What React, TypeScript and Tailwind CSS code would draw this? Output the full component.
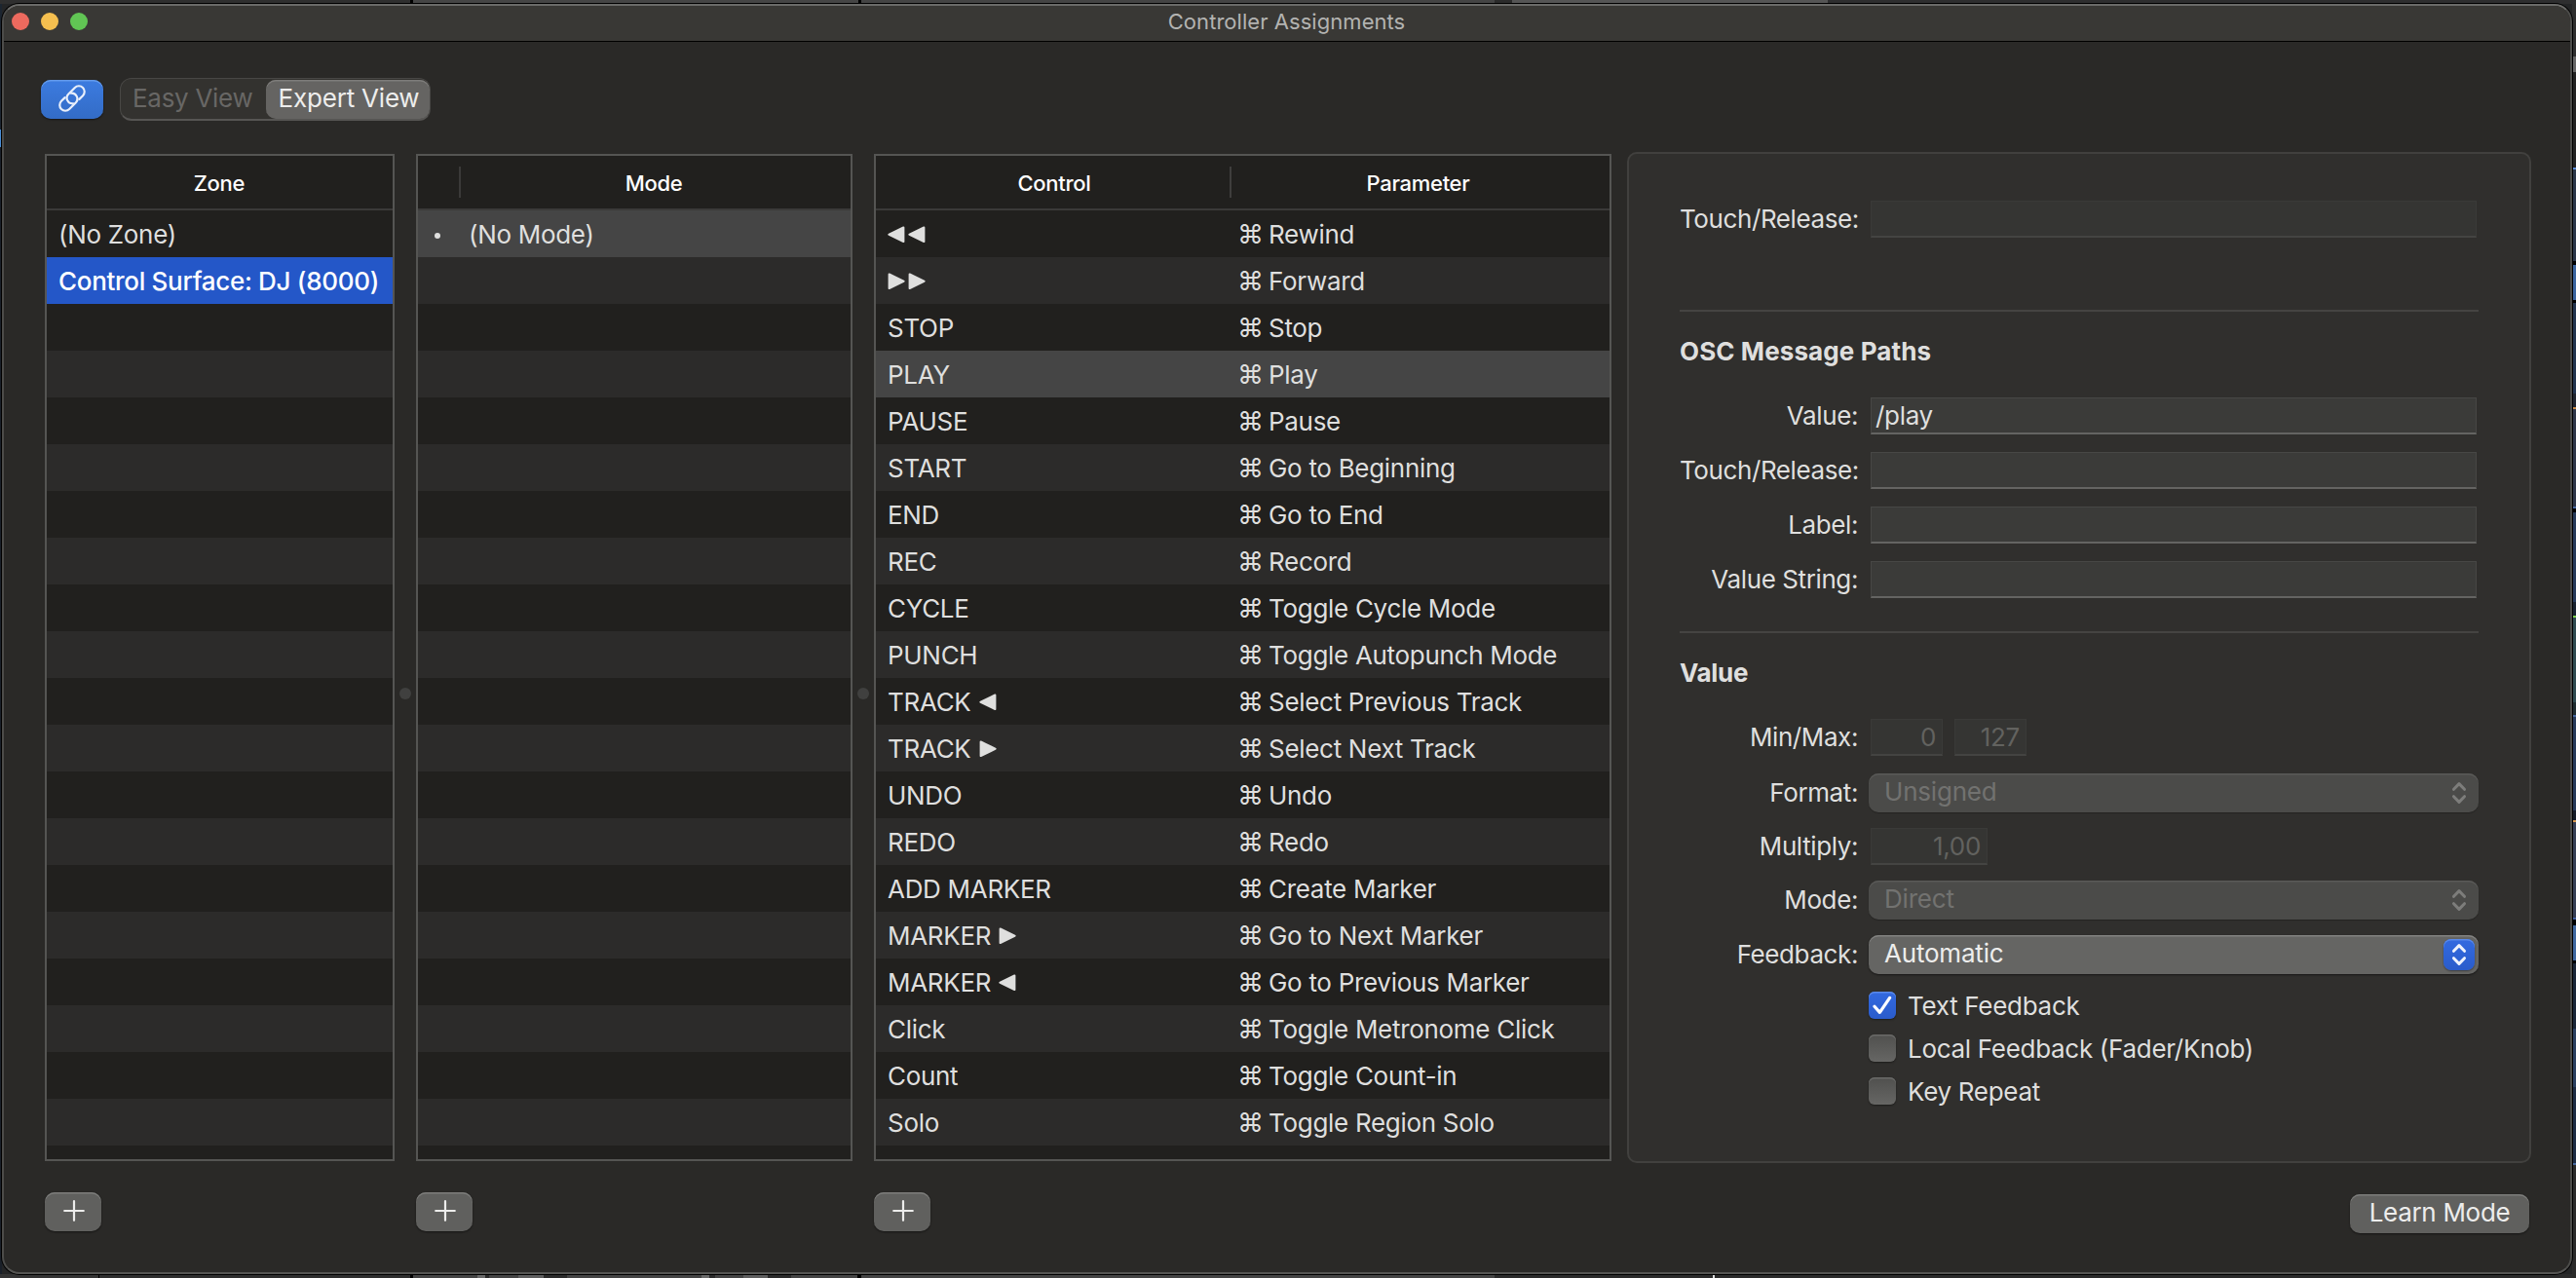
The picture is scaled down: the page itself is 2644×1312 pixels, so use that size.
import type { ReactNode } from 'react'
import clsx from 'clsx'

type Assignment = { control: ReactNode; parameter: string }

function Arrow({ left = false }: { left?: boolean }) {
  return (
    <svg className="w-[18px] h-[18px] shrink-0" viewBox="0 0 18 18" fill="currentColor">
      <path
        transform={left ? 'matrix(-1 0 0 1 18 0)' : undefined}
        d="M0.6 1.5C0.6 0.6 1.3 0.2 2.1 0.6L16.9 7.7C18 8.3 18 9.2 16.9 9.8L2.1 16.9C1.3 17.3 0.6 16.9 0.6 16Z"
      />
    </svg>
  )
}

const assignments: Assignment[] = [
  { control: <span className="flex gap-[3px]"><Arrow left /><Arrow left /></span>, parameter: 'Rewind' },
  { control: <span className="flex gap-[3px]"><Arrow /><Arrow /></span>, parameter: 'Forward' },
  { control: 'STOP', parameter: 'Stop' },
  { control: 'PLAY', parameter: 'Play' },
  { control: 'PAUSE', parameter: 'Pause' },
  { control: 'START', parameter: 'Go to Beginning' },
  { control: 'END', parameter: 'Go to End' },
  { control: 'REC', parameter: 'Record' },
  { control: 'CYCLE', parameter: 'Toggle Cycle Mode' },
  { control: 'PUNCH', parameter: 'Toggle Autopunch Mode' },
  { control: <>TRACK<Arrow left /></>, parameter: 'Select Previous Track' },
  { control: <>TRACK<Arrow /></>, parameter: 'Select Next Track' },
  { control: 'UNDO', parameter: 'Undo' },
  { control: 'REDO', parameter: 'Redo' },
  { control: 'ADD MARKER', parameter: 'Create Marker' },
  { control: <>MARKER<Arrow /></>, parameter: 'Go to Next Marker' },
  { control: <>MARKER<Arrow left /></>, parameter: 'Go to Previous Marker' },
  { control: 'Click', parameter: 'Toggle Metronome Click' },
  { control: 'Count', parameter: 'Toggle Count-in' },
  { control: 'Solo', parameter: 'Toggle Region Solo' },
]

const SELECTED_ASSIGNMENT = 3

function Row({ children, className }: { children?: ReactNode; className?: string }) {
  return (
    <div className={clsx('h-12 pt-0.5 shrink-0 flex items-center even:bg-[#2c2b2a]', className)}>{children}</div>
  )
}

function EmptyRows({ count }: { count: number }) {
  return Array.from({ length: count }, (_, i) => <Row key={i} />)
}

function Table({ header, children, className }: { header: ReactNode; children: ReactNode; className: string }) {
  return (
    <div className={clsx('mt-0.5 h-[1034px] flex flex-col shrink-0 border-2 border-[#555553] bg-[#21201e] overflow-hidden', className)}>
      <div className="h-14 shrink-0 flex items-center border-b-2 border-[#3b3a39] text-[22px] font-medium text-white">
        {header}
      </div>
      <div className="flex flex-col">{children}</div>
    </div>
  )
}

function Splitter() {
  return (
    <div className="w-[22px] shrink-0 flex justify-center">
      <div className="mt-[550px] w-3 h-3 rounded-full bg-[#40403f]" />
    </div>
  )
}

function AddButton() {
  return (
    <button className="w-[58px] h-10 flex items-center justify-center rounded-[10px] bg-[#60605e] shadow-[inset_0_1.5px_0_#7d7d7b,0_1px_2px_rgba(0,0,0,0.5)]">
      <svg className="w-[22px] h-[22px] mb-[3px] ml-px" viewBox="0 0 22 22" stroke="#ededec" strokeWidth="2.2" strokeLinecap="round">
        <path d="M11 1.2V20.8M1.2 11H20.8" />
      </svg>
    </button>
  )
}

function Chevrons({ className }: { className?: string }) {
  return (
    <svg className={clsx('w-4 h-6', className)} viewBox="0 0 16 24" fill="none" stroke="currentColor" strokeWidth="3" strokeLinecap="round" strokeLinejoin="round">
      <path d="M2.5 8.3L8 2.6L13.5 8.3M2.5 15.7L8 21.4L13.5 15.7" />
    </svg>
  )
}

function FormRow({ label, children, className }: { label: string; children: ReactNode; className?: string }) {
  return (
    <div className={clsx('flex items-center', className)}>
      <span className="w-[183px] -mr-px shrink-0 text-right whitespace-nowrap tracking-[-0.4px]">{label}</span>
      {children}
    </div>
  )
}

function Field({ value, disabled, className }: { value?: string; disabled?: boolean; className?: string }) {
  return (
    <div
      className={clsx(
        'h-[38px] flex items-center border border-b-2',
        disabled
          ? 'justify-end pr-[6px] bg-[#353533] border-[#3a3a38] border-b-[#444442] text-[#62625f]'
          : 'pl-1 bg-[#3b3b39] border-[#474745] border-b-[#646462]',
        className ?? 'ml-[14px] w-[622px]',
      )}
    >
      {value}
    </div>
  )
}

function Select({ value, disabled }: { value: string; disabled?: boolean }) {
  return (
    <div
      className={clsx(
        'ml-3 w-[626px] h-10 flex items-center justify-between rounded-[10px] pl-4 pr-1',
        disabled
          ? 'bg-[#4b4b49] text-[#727270] shadow-[inset_0_1.5px_0_#5a5a58,0_1px_1px_rgba(0,0,0,0.25)]'
          : 'bg-[#656563] text-[#ededec] shadow-[inset_0_1.5px_0_#828280,0_1px_2px_rgba(0,0,0,0.5)]',
      )}
    >
      <span className="pb-0.5 tracking-[-0.2px]">{value}</span>
      <span
        className={clsx(
          'w-8 h-8 flex items-center justify-center rounded-[8px]',
          !disabled && 'bg-linear-to-b from-[#336ae0] to-[#2a5ccb] shadow-[inset_0_1.5px_0_#5a8aea,0_1px_2px_rgba(0,0,0,0.4)]',
        )}
      >
        <Chevrons className={disabled ? 'text-[#7d7d7b]' : 'text-[#eef2fc]'} />
      </span>
    </div>
  )
}

function Checkbox({ label, checked }: { label: string; checked?: boolean }) {
  return (
    <div className="flex items-center gap-3 h-7">
      <span
        className={clsx(
          'w-7 h-7 flex items-center justify-center rounded-[6px]',
          checked
            ? 'bg-linear-to-b from-[#336ae0] to-[#2a5ccb] shadow-[inset_0_1.5px_0_#5a8aea,0_1px_2px_rgba(0,0,0,0.4)]'
            : 'bg-linear-to-b from-[#50504e] to-[#666664] shadow-[inset_0_1.5px_0_#6a6a68,0_1px_2px_rgba(0,0,0,0.4)]',
        )}
      >
        {checked && (
          <svg className="w-5 h-5" viewBox="0 0 20 20" fill="none" stroke="#fff" strokeWidth="3.2" strokeLinecap="round" strokeLinejoin="round">
            <path d="M2 11.2L7.4 17.4L17.6 2.4" />
          </svg>
        )}
      </span>
      <span className="pt-0.5">{label}</span>
    </div>
  )
}

// Slivers of the project window that show behind the dialog
const topSlivers = [
  'w-[421px] bg-[#2f2f2f]',
  'w-[3px] bg-black',
  'w-[457px] bg-[#454545]',
  'w-[3px] bg-black',
  'w-[650px] bg-[#444444]',
  'w-[18px] bg-[#2b2b2b]',
  'w-[324px] bg-[#555555]',
  'grow bg-[#2e2e2f]',
]

const bottomSlivers = [
  'w-[101px] bg-[#343434]',
  'w-[1px] bg-black',
  'w-[319px] bg-[#2e2e2e]',
  'w-[3px] bg-black',
  'w-[66px] bg-[#444444]',
  'w-[8px] bg-[#6a6a6a]',
  'w-[4px] bg-[#2b2b2b]',
  'w-[30px] bg-[#444444]',
  'w-[26px] bg-[#5e5e5e]',
  'w-[24px] bg-[#2b2b2b]',
  'w-[138px] bg-[#444444]',
  'w-[8px] bg-[#6a6a6a]',
  'w-[6px] bg-[#2b2b2b]',
  'w-[29px] bg-[#444444]',
  'w-[25px] bg-[#5e5e5e]',
  'w-[24px] bg-[#2b2b2b]',
  'w-[68px] bg-[#444444]',
  'w-[4px] bg-black',
  'w-[650px] bg-[#444444]',
  'w-[224px] bg-[#2b2b2b]',
  'w-[2px] bg-[#dddddd]',
  'grow bg-[#2b2b2b]',
]

const rightSlivers = [
  'h-[54px] bg-[#2e2e2e]',
  'h-[16px] bg-[#666666]',
  'h-[98px] bg-[#222222]',
  'h-[2px] bg-[#5b8dd8]',
  'h-[94px] bg-[#2b3648]',
  'h-[4px] bg-black',
  'h-[36px] bg-[#3b659f]',
  'h-[3px] bg-black',
  'h-[93px] bg-[#22344f]',
  'h-[14px] bg-[#20252f]',
  'h-[2px] bg-[#c88d4a]',
  'h-[100px] bg-[#2e3648]',
  'h-[2px] bg-[#4668a0]',
  'h-[4px] bg-black',
  'h-[92px] bg-[#263a5a]',
  'h-[14px] bg-[#182230]',
  'h-[2px] bg-[#7fd052]',
  'h-[87px] bg-[#2f4a50]',
  'h-[13px] bg-[#1e2c30]',
  'h-[2px] bg-[#4668a0]',
  'h-[96px] bg-[#263a5a]',
  'h-[10px] bg-[#151c28]',
  'h-[2px] bg-[#d89850]',
  'h-[98px] bg-[#363f55]',
  'h-[2px] bg-[#4060a0]',
  'h-[6px] bg-black',
  'h-[36px] bg-[#3f68a0]',
  'h-[3px] bg-black',
  'h-[67px] bg-[#1a2638]',
  'h-[60px] bg-[#2a3f60]',
  'h-[78px] bg-[#1d2c44]',
  'h-[2px] bg-[#4668a0]',
  'grow bg-[#2a2a2a]',
]

function App() {
  return (
    <div className="w-[2644px] h-[1312px] flex flex-col overflow-hidden bg-[#242526] font-['Inter','Noto_Sans',sans-serif] text-[26px] leading-8 tracking-[-0.3px] text-[#dfdfde]">
      <div className="h-1 shrink-0 flex">
        {topSlivers.map((cls, i) => <div key={i} className={cls} />)}
      </div>

      <div className="h-[1304px] shrink-0 flex">
        <div className="w-0.5 shrink-0 flex flex-col">
          <div className="h-[129px] bg-[#1c2530]" />
          <div className="h-[18px] bg-[#4a8ed8]" />
          <div className="grow bg-[#1a2029]" />
        </div>

        {/* Dialog window */}
        <div className="relative w-[2638px] shrink-0 flex flex-col rounded-[18px] overflow-hidden border-2 border-t-[#6b6b69] border-x-[#4c4c4a] border-b-[#555553] bg-[#2a2927] shadow-[0_0_0_1px_#000]">
          {/* Title bar */}
          <div className="h-[37px] shrink-0 grid grid-cols-3 items-center bg-[#393835] border-b border-black">
            <div className="flex gap-3 pl-2 pb-1">
              <span className="w-[18px] h-[18px] rounded-full bg-[#ed6a5e]" />
              <span className="w-[18px] h-[18px] rounded-full bg-[#f5bf4f]" />
              <span className="w-[18px] h-[18px] rounded-full bg-[#61c554]" />
            </div>
            <div className="pb-1 pr-px text-center text-[22px] tracking-[0.05px] text-[#b3b3b1]">Controller Assignments</div>
          </div>

          {/* Toolbar */}
          <div className="mt-[37px] h-11 shrink-0 flex items-center pl-[38px] gap-[17px]">
            <button className="w-16 h-10 flex items-center justify-center rounded-[10px] bg-linear-to-b from-[#3c7be0] to-[#336cc6] shadow-[inset_0_1.5px_0_#639aea,0_1px_2px_rgba(0,0,0,0.5)]">
              <svg className="w-8 h-8 mb-[3px]" viewBox="-16 -16 32 32" fill="none" stroke="#e8effb" strokeWidth="2.2" strokeLinecap="round">
                <g transform="rotate(-45)">
                  <path d="M4.6 5.8H9.8A5.8 5.8 0 0 0 9.8 -5.8H0.6A5.8 5.8 0 0 0 -2.9 4.6" />
                  <path d="M-4.6 -5.8H-9.8A5.8 5.8 0 0 0 -9.8 5.8H-0.6A5.8 5.8 0 0 0 2.9 -4.6" />
                </g>
              </svg>
            </button>
            <div className="w-[319px] h-11 flex items-center justify-between rounded-[12px] border border-[#484745] border-b-2 border-b-[#565553] bg-[#33322f]">
              <span className="pl-3 pb-0.5 text-[#686765]">Easy View</span>
              <span className="w-[168px] h-10 pb-px pl-0.5 flex items-center justify-center rounded-[10px] bg-[#656462] text-[#ededec] tracking-[-0.2px] shadow-[inset_0_1.5px_0_#7d7c7a]">
                Expert View
              </span>
            </div>
          </div>

          {/* Columns */}
          <div className="mt-8 h-[1038px] shrink-0 flex items-start pl-[42px]">
            <Table className="w-[359px]" header={<span className="grow pt-0.5 pr-px text-center">Zone</span>}>
              <Row className="pl-[12px]">(No Zone)</Row>
              <Row className="pl-[12px] bg-[#2457c8]! text-white font-medium">Control Surface: DJ (8000)</Row>
              <EmptyRows count={19} />
            </Table>
            <Splitter />
            <Table
              className="w-[448px]"
              header={
                <>
                  <span className="w-[44px] h-8 border-r-2 border-[#3b3a39]" />
                  <span className="grow pt-0.5 pr-1 text-center">Mode</span>
                </>
              }
            >
              <Row className="bg-[#454545]">
                <span className="ml-[17px] mt-0.5 w-[6px] h-[6px] rounded-full bg-[#dfdfde]" />
                <span className="ml-[29px]">(No Mode)</span>
              </Row>
              <EmptyRows count={20} />
            </Table>
            <Splitter />
            <Table
              className="w-[757px]"
              header={
                <>
                  <span className="w-[363px] pt-0.5 pl-[3px] text-center">Control</span>
                  <span className="w-0.5 h-8 bg-[#3f3e3d]" />
                  <span className="grow pt-0.5 pr-[5px] text-center">Parameter</span>
                </>
              }
            >
              {assignments.map((a, i) => (
                <Row key={a.parameter} className={i === SELECTED_ASSIGNMENT ? 'bg-[#454545]!' : undefined}>
                  <span className="w-[371px] pl-[12px] flex items-center gap-2">{a.control}</span>
                  <span className="w-[32px] text-[27px]">⌘</span>
                  <span className="whitespace-nowrap">{a.parameter}</span>
                </Row>
              ))}
              <Row />
            </Table>

            {/* Inspector */}
            <div className="ml-4 w-[928px] h-[1038px] shrink-0 flex flex-col px-[52px] pt-12 rounded-[10px] border-2 border-[#41403e] bg-[#302f2d]">
              <FormRow label="Touch/Release:">
                <Field disabled />
              </FormRow>
              <hr className="mt-[74px] border-t-2 border-[#454442]" />
              <h2 className="mt-[25px] font-bold tracking-[0.1px]">OSC Message Paths</h2>
              <div className="mt-[31px] flex flex-col gap-[18px]">
                <FormRow label="Value:"><Field value="/play" /></FormRow>
                <FormRow label="Touch/Release:"><Field /></FormRow>
                <FormRow label="Label:"><Field /></FormRow>
                <FormRow label="Value String:"><Field /></FormRow>
              </div>
              <hr className="mt-[34px] border-t-2 border-[#454442]" />
              <h2 className="mt-[25px] font-bold">Value</h2>
              <FormRow className="mt-[31px]" label="Min/Max:">
                <Field disabled value="0" className="ml-[14px] w-[74px]" />
                <Field disabled value="127" className="ml-3 w-[74px]" />
              </FormRow>
              <div className="mt-[18px] flex flex-col gap-4">
                <FormRow label="Format:"><Select disabled value="Unsigned" /></FormRow>
                <FormRow label="Multiply:"><Field disabled value="1,00" className="ml-[14px] w-[120px]" /></FormRow>
                <FormRow label="Mode:"><Select disabled value="Direct" /></FormRow>
                <FormRow label="Feedback:"><Select value="Automatic" /></FormRow>
              </div>
              <div className="mt-[18px] pl-[194px] flex flex-col gap-4">
                <Checkbox checked label="Text Feedback" />
                <Checkbox label="Local Feedback (Fader/Knob)" />
                <Checkbox label="Key Repeat" />
              </div>
            </div>
          </div>

          {/* Footer */}
          <div className="mt-[30px] flex items-start pl-[42px] pr-[42px]">
            <div className="w-[381px]"><AddButton /></div>
            <div className="w-[470px]"><AddButton /></div>
            <AddButton />
            <button className="ml-auto mt-0.5 w-[184px] h-10 rounded-[10px] pb-0.5 bg-[#60605e] text-[#ededec] shadow-[inset_0_1.5px_0_#7d7d7b,0_1px_2px_rgba(0,0,0,0.5)]">
              Learn Mode
            </button>
          </div>
        </div>

        <div className="w-1 shrink-0 flex flex-col">
          {rightSlivers.map((cls, i) => <div key={i} className={cls} />)}
        </div>
      </div>

      <div className="h-1 shrink-0 flex">
        {bottomSlivers.map((cls, i) => <div key={i} className={cls} />)}
      </div>
    </div>
  )
}

export default App
